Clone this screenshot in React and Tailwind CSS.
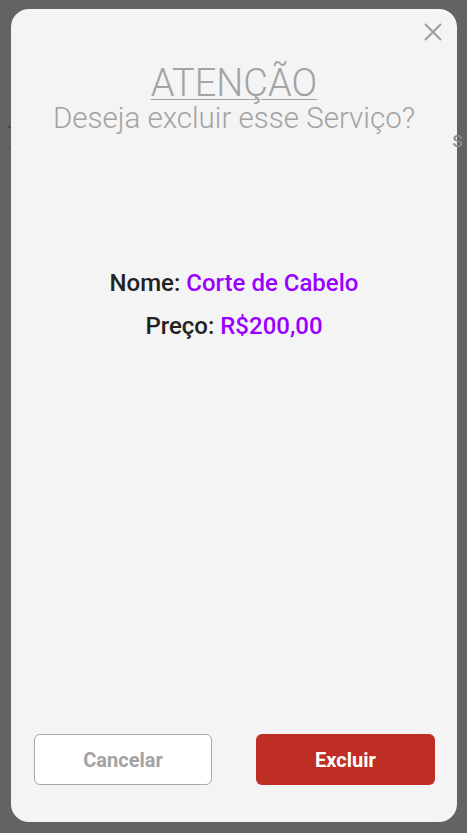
import React from 'react';

export default function App() {
  return (
    <div className="relative w-[467px] h-[833px] overflow-hidden bg-[#636363]" style={{ fontFamily: 'Roboto, "Noto Sans", sans-serif' }}>
      {/* page behind the overlay */}
      <div className="absolute left-[8px] top-[126px] w-[3px] h-[2px] bg-[#4a4a4a]" />
      <div className="absolute left-[8px] top-[148px] w-[3px] h-[1px] bg-[#555]" />

      {/* modal */}
      <div className="absolute left-[11px] top-[9px] w-[446px] h-[813px] rounded-[18px] bg-[#f4f4f4] flex flex-col">
        <button className="absolute right-[14px] top-[13px] text-[#9a9a9a]">
          <svg width="20" height="20" viewBox="0 0 20 20" fill="none" stroke="currentColor" strokeWidth="1.8">
            <path d="M2 2 L18 18 M18 2 L2 18" />
          </svg>
        </button>

        <div className="pt-[53px] flex flex-col items-center text-[#a3a3a3]">
          <h1 className="text-[38px] leading-[42px] font-light underline underline-offset-[3px] decoration-1">ATENÇÃO</h1>
          <p className="text-[29.5px] leading-[28px] font-light">Deseja excluir esse Serviço?</p>
        </div>

        <div className="mt-[137px] flex flex-col items-center gap-[14px] text-[24px] leading-[29px]">
          <p className="font-medium text-[#222]">
            Nome: <span className="text-[#9a00ff]">Corte de Cabelo</span>
          </p>
          <p className="font-medium text-[#222]">
            Preço: <span className="text-[#9a00ff]">R$200,00</span>
          </p>
        </div>

        <div className="mt-auto mb-[37px] pl-[23px] pr-[22px] flex justify-between">
          <button className="w-[178px] h-[51px] rounded-[6px] border border-[#a8a8a8] bg-white text-[#a3a3a3] text-[20px] font-bold">
            Cancelar
          </button>
          <button className="w-[179px] h-[51px] rounded-[6px] bg-[#bf2e25] text-white text-[20px] font-bold">
            Excluir
          </button>
        </div>
      </div>

      <div className="absolute left-[452px] top-[123px] text-[22px] text-[#8a8a8a]">s</div>
    </div>
  );
}
